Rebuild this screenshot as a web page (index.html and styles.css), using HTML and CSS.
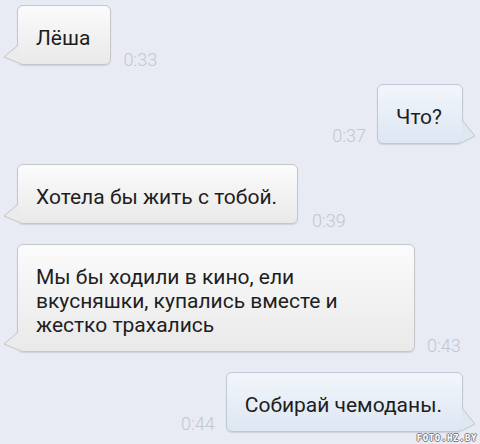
FILE: index.html
```html
<!DOCTYPE html>
<html lang="ru">
<head>
<meta charset="utf-8">
<link rel="stylesheet" href="styles.css">
</head>
<body>
<div class="chat">
  <div class="row in r1">
    <div class="bubble">
      <svg class="tail" width="16" height="22" viewBox="0 0 16 22"><path d="M15 2 L1 14 L16 20" class="tail-fill"/><path d="M15 2 L1 14 L15.5 20" class="tail-line"/></svg>
      Лёша
    </div>
    <span class="time">0:33</span>
  </div>
  <div class="row out">
    <span class="time">0:37</span>
    <div class="bubble">
      <svg class="tail" width="16" height="25" viewBox="0 0 16 25"><path d="M1 1 L14 17 L0 24" class="tail-fill"/><path d="M1 1 L14 17 L0.5 24" class="tail-line"/></svg>
      Что?
    </div>
  </div>
  <div class="row in">
    <div class="bubble">
      <svg class="tail" width="16" height="22" viewBox="0 0 16 22"><path d="M15 2 L1 14 L16 20" class="tail-fill"/><path d="M15 2 L1 14 L15.5 20" class="tail-line"/></svg>
      Хотела бы жить с тобой.
    </div>
    <span class="time t3">0:39</span>
  </div>
  <div class="row in">
    <div class="bubble wide">
      <svg class="tail" width="16" height="22" viewBox="0 0 16 22"><path d="M15 2 L1 14 L16 20" class="tail-fill"/><path d="M15 2 L1 14 L15.5 20" class="tail-line"/></svg>
      Мы бы ходили в кино, ели вкусняшки, купались вместе и жестко трахались
    </div>
    <span class="time t4">0:43</span>
  </div>
  <div class="row out">
    <span class="time">0:44</span>
    <div class="bubble">
      <svg class="tail" width="16" height="25" viewBox="0 0 16 25"><path d="M1 1 L14 17 L0 24" class="tail-fill"/><path d="M1 1 L14 17 L0.5 24" class="tail-line"/></svg>
      Собирай чемоданы.
    </div>
  </div>
</div>
<div class="watermark">FOTO.HZ.BY</div>
</body>
</html>
```

FILE: styles.css
```css
html, body {
  margin: 0;
  padding: 0;
}
body {
  width: 480px;
  height: 444px;
  background: #e8ebf3;
  font-family: Roboto, "Noto Sans", sans-serif;
  position: relative;
  overflow: hidden;
}
.chat {
  display: flex;
  flex-direction: column;
  gap: 20px;
  padding: 5px 17px 0 17px;
}
.r1 + .row {
  margin-top: -1px;
}
.row {
  display: flex;
  align-items: flex-end;
}
.row.out {
  justify-content: flex-end;
}
.bubble {
  position: relative;
  box-sizing: border-box;
  max-width: 398px;
  padding: 20px 20px 14px 18px;
  font-size: 21px;
  line-height: 24px;
  color: #1e1e1e;
  border-radius: 6px;
  border: 1px solid #c4c6cb;
  box-shadow: 0 1px 1px rgba(80, 90, 110, 0.18);
}
.in .bubble {
  background: linear-gradient(#fbfbfb, #e9e9ea);
}
.out .bubble {
  background: linear-gradient(#f2f6fb, #dde6f2);
  border-color: #bfc8d4;
}
.bubble.wide {
  width: 398px;
}
.tail {
  position: absolute;
  bottom: -1px;
  overflow: visible;
}
.in .tail {
  left: -15px;
}
.out .tail {
  right: -15px;
}
.tail-fill {
  stroke: none;
}
.in .tail-fill {
  fill: #ebebec;
}
.out .tail-fill {
  fill: #dfe7f2;
}
.tail-line {
  fill: none;
  stroke: #bfc3ca;
  stroke-width: 1;
}
.time {
  font-size: 18px;
  font-weight: 300;
  line-height: 18px;
  color: #c2c7d1;
  margin-bottom: -4px;
}
.in .time {
  margin-left: 12px;
}
.out .time {
  margin-right: 11px;
  margin-bottom: -1px;
}
.time.t3 {
  margin-left: 14px;
  margin-bottom: -6px;
}
.time.t4 {
  margin-left: 12px;
  margin-bottom: -3px;
}
.watermark {
  position: absolute;
  right: 3px;
  bottom: 1px;
  font-family: "DejaVu Sans Mono", monospace;
  font-size: 9px;
  line-height: 10px;
  letter-spacing: 0.6px;
  color: #ffffff;
  text-shadow: 1px 0 0 #7a7f88, -1px 0 0 #7a7f88, 0 1px 0 #7a7f88, 0 -1px 0 #7a7f88;
  font-weight: bold;
}
```
